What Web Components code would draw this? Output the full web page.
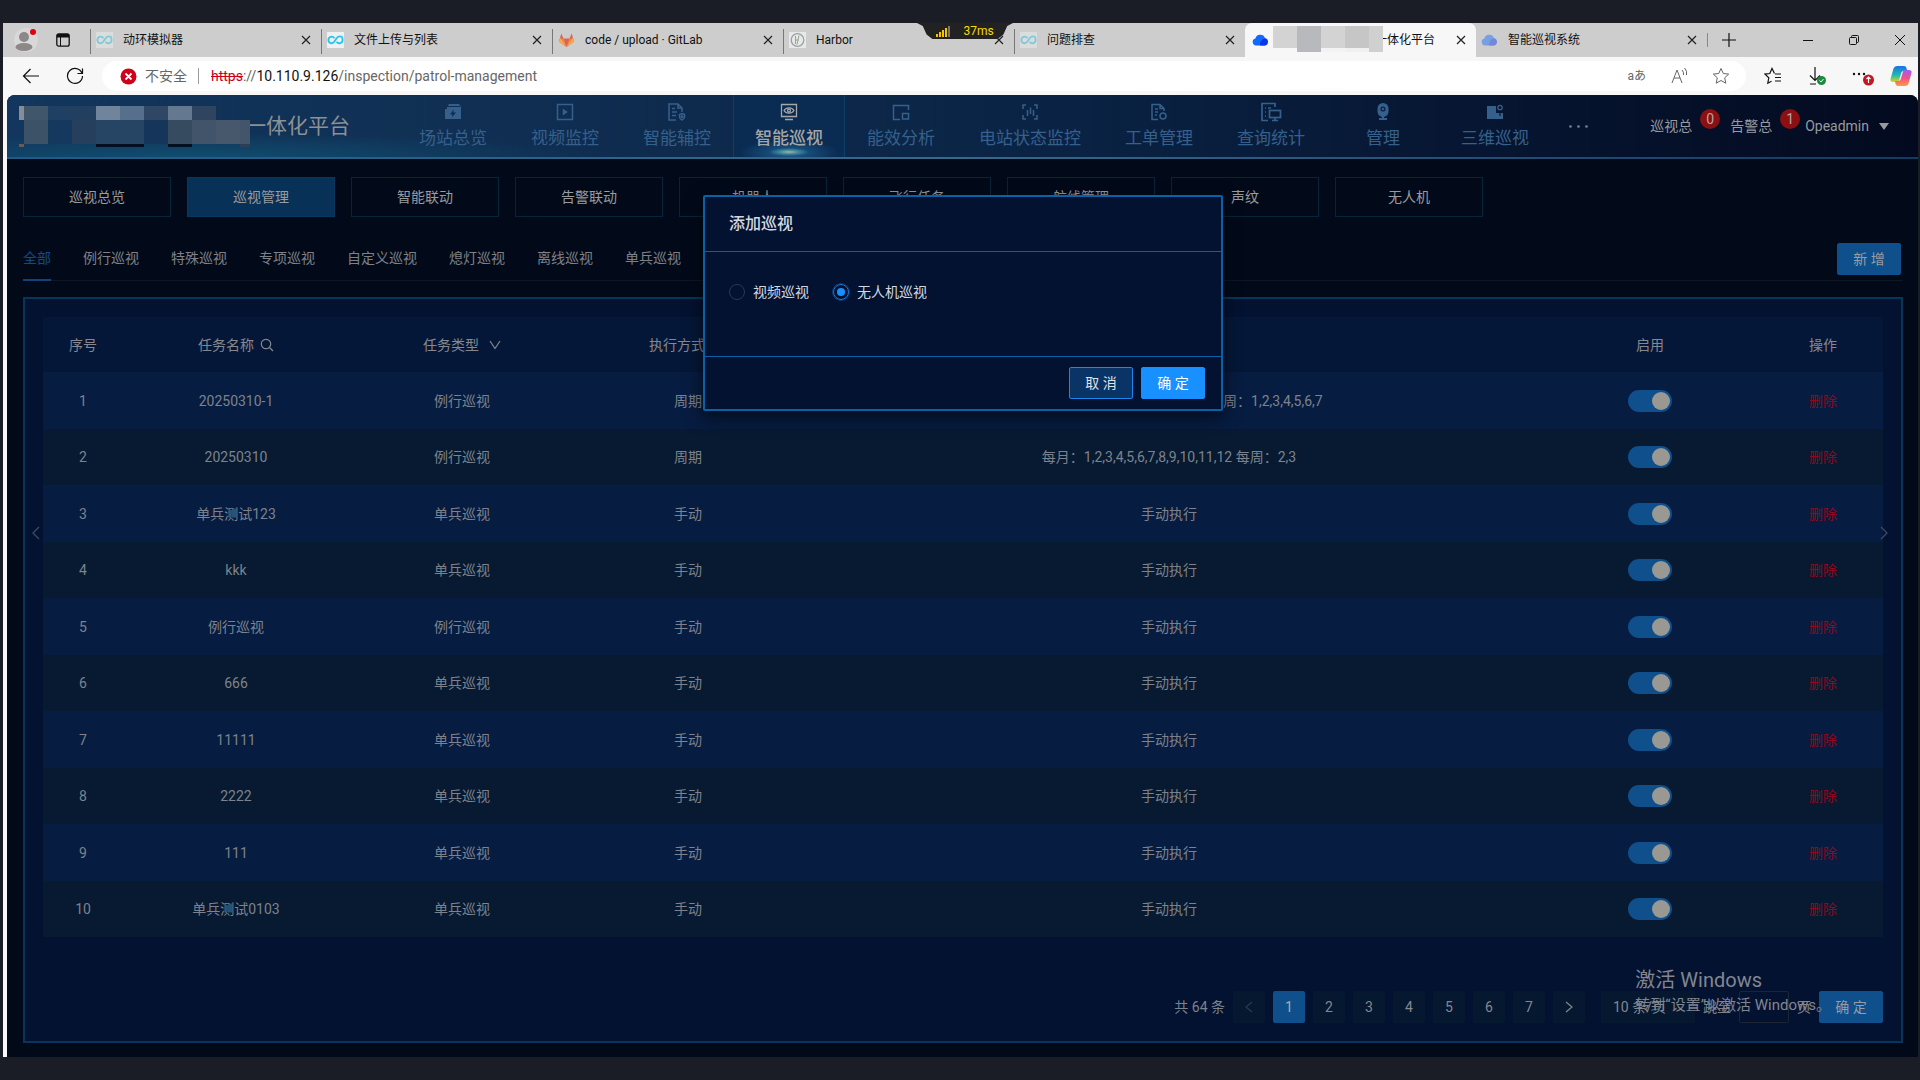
<!DOCTYPE html>
<html lang="zh-CN">
<head>
<meta charset="utf-8">
<title>巡视管理</title>
<style>
  body {
    margin: 0; min-height: 100vh; box-sizing: border-box; padding: 23px 2px 23px 3px;
    display: flex; background: #1a1d25;
    font-family: Roboto, "Noto Sans CJK SC", sans-serif; font-size: 14px; line-height: 22px;
  }
</style>
</head>
<body>
<browser-window>
  <browser-tab slot="tab" icon="loop" faded label="动环模拟器"></browser-tab>
  <browser-tab slot="tab" icon="loop" label="文件上传与列表"></browser-tab>
  <browser-tab slot="tab" icon="fox" label="code / upload · GitLab"></browser-tab>
  <browser-tab slot="tab" icon="harbor" label="Harbor"></browser-tab>
  <browser-tab slot="tab" icon="loop" faded label="问题排查"></browser-tab>
  <browser-tab slot="tab" icon="cloud" active masked label="一体化平台"></browser-tab>
  <browser-tab slot="tab" icon="cloud" faded label="智能巡视系统"></browser-tab>
  <patrol-page>
    <app-header slot="header">
      <nav-item icon="station" label="场站总览"></nav-item>
      <nav-item icon="video" label="视频监控"></nav-item>
      <nav-item icon="assist" label="智能辅控"></nav-item>
      <nav-item icon="patrol" label="智能巡视" active></nav-item>
      <nav-item icon="energy" label="能效分析"></nav-item>
      <nav-item icon="state" label="电站状态监控"></nav-item>
      <nav-item icon="order" label="工单管理"></nav-item>
      <nav-item icon="stats" label="查询统计"></nav-item>
      <nav-item icon="manage" label="管理"></nav-item>
      <nav-item icon="three" label="三维巡视"></nav-item>
    </app-header>
    <sub-menu slot="menu" items="巡视总览,巡视管理,智能联动,告警联动,机器人,飞行任务,航线管理,声纹,无人机" current="1"></sub-menu>
    <type-tabs slot="tabs" items="全部,例行巡视,特殊巡视,专项巡视,自定义巡视,熄灯巡视,离线巡视,单兵巡视">
      <ui-button>新 增</ui-button>
    </type-tabs>
    <patrol-panel slot="panel">
      <patrol-table></patrol-table>
      <page-pager slot="footer"></page-pager>
    </patrol-panel>
    <add-dialog slot="dialog" heading="添加巡视">
      <radio-choice name="kind" label="视频巡视"></radio-choice>
      <radio-choice name="kind" label="无人机巡视" checked></radio-choice>
      <ui-button slot="actions" kind="outline">取 消</ui-button>
      <ui-button slot="actions" kind="bright">确 定</ui-button>
    </add-dialog>
    <win-watermark slot="dialog"></win-watermark>
  </patrol-page>
</browser-window>

<script>
const define = (name, render) => customElements.define(name, class extends HTMLElement {
  connectedCallback() {
    if (this.shadowRoot) return;
    const t = document.createElement('template');
    t.innerHTML = '<style>*{box-sizing:border-box}button,input,select{font:inherit}a{text-decoration:none;color:inherit}svg{display:block;flex:none}</style>' + render(this);
    this.attachShadow({ mode: 'open' }).append(t.content.cloneNode(true));
  }
});
const attr = (el, n) => el.getAttribute(n) || '';
const line = (w, h, d, extra = '') => `<svg width="${w}" height="${h}" viewBox="0 0 ${w} ${h}" fill="none" stroke="currentColor" ${extra}>${d}</svg>`;
const mosaic = (w, h, cells) => `<svg class="mosaic" width="${w}" height="${h}" shape-rendering="crispEdges">${cells.map(([x, y, cw, ch, c]) => `<rect x="${x}" y="${y}" width="${cw}" height="${ch}" fill="${c}"/>`).join('')}</svg>`;

const FAVICONS = {
  loop: `<svg width="17" height="16" viewBox="0 0 17 16"><path fill="#eef1f2" d="M0 0h17v16H0z"/><path fill="none" stroke="#27c4e8" stroke-width="1.8" d="M15.6 5.6C14.6 4.2 11.6 3.6 9.8 6L7.4 9.6C5.6 12.4 1.4 11.4 1.4 8S5.6 3.6 7.4 6.2M9.6 9.8c1.8 2.6 6 1.600 6-1.800 0-1-.2-1.800-.7-2.300"/></svg>`,
  fox: `<svg width="17" height="16" viewBox="0 0 17 16" opacity=".75"><path fill="#e24329" d="M8.500 15 1 9.500 3.300 1.500l2.200 5h6l2.200-5L16 9.500z"/><path fill="#fc6d26" d="M8.500 15 5.500 6.500H2L1 9.500zM8.500 15l3-8.500H15l1 3z"/><path fill="#fca326" d="M1 9.500l1.200-3.600L8.500 15zM16 9.500l-1.200-3.600L8.500 15z"/></svg>`,
  harbor: `<svg width="17" height="16" viewBox="0 0 17 16"><path fill="#e8e8e8" d="M0 0h17v16H0z"/><circle cx="8.500" cy="8" r="6.300" fill="none" stroke="#9aa3a3" stroke-width="1.300"/><path stroke="#8fa98a" fill="none" d="M6.500 4v8M6.500 8h3M10 3.500 8 12.500"/></svg>`,
  cloud: `<svg width="17" height="16" viewBox="0 0 17 16"><path fill="#0f6bff" d="M4 13.500a3.500 3.500 0 0 1-.6-6.900 5 5 0 0 1 9.600-.6 3.900 3.900 0 0 1-.2 7.500z"/><path fill="#0a35e8" d="M8 13.500c-.5-3.500 2-6.500 5-6.900a3.500 3.500 0 0 1 0 6.900z"/></svg>`
};
const NAV = {
  station: line(18, 18, '<path fill="currentColor" stroke="none" fill-rule="evenodd" d="M5 1h10l2 3v12H1V6h2V4zM9.500 6.500L6 11.500h2.500l-.5 3 4-5H9.500z"/><path d="M3 3.500h13" stroke="#0f2d50"/>'),
  video: line(18, 18, '<rect x="1.500" y="1.500" width="15" height="15"/><path fill="currentColor" d="M7.500 7v4l3-2z"/>', 'stroke-width="1.500"'),
  assist: line(20, 18, '<path d="M9 17H2V1h9l4 4v4M11 1v4h4M5 5.500h3M5 9h5M5 12.500h4"/><path d="M15 10.500l2.500 1v2.500c0 1.500-2.500 3-2.500 3s-2.500-1.500-2.500-3v-2.500z"/><circle cx="15" cy="13.500" r=".8"/>', 'stroke-width="1.500"'),
  patrol: line(18, 18, '<path d="M1.500 1.500h15v12h-15zM5 16.500h8"/><path d="M4 7.500C6 4 12 4 14 7.500 12 11 6 11 4 7.500z"/><circle cx="9" cy="7.500" r="1.500"/>', 'stroke-width="1.300"'),
  energy: line(18, 18, '<path d="M8 16.500H1.500v-14h15V7"/><rect x="10.500" y="10.500" width="6" height="5.500"/>', 'stroke-width="1.500"'),
  state: line(18, 18, '<path d="M5 2H2v4M13 2h3v4M5 16H2v-4M13 16h3v-4M6.500 7v6M9.500 4.500V11M12.500 7v6"/>', 'stroke-width="1.500"'),
  order: line(18, 18, '<path d="M8 16.500H2v-15h8l4 4V8M10 1.500v4h4M5 6h3M5 9h3M5 12h2"/><circle cx="13" cy="13" r="3"/>', 'stroke-width="1.500"'),
  stats: line(22, 20, '<path d="M8 18.500H2v-17h13V5M5 6h1M8 6h3M5 10h1M5 14h1"/><rect x="9.500" y="8.500" width="11" height="7"/><path d="M15 15.500v3M12 18.500h6"/>', 'stroke-width="1.700"'),
  manage: line(18, 18, '<path fill="currentColor" stroke="none" fill-rule="evenodd" d="M9 0a5.500 5.500 0 0 0-5.500 5.500v3c0 3 2 5 4.500 5.400V15H5v2h8v-2h-3v-1.100c2.500-.4 4.500-2.400 4.500-5.400v-3A5.500 5.500 0 0 0 9 0zm0 3.500a2.500 2.500 0 1 1 0 5 2.500 2.500 0 0 1 0-5z"/><circle cx="9" cy="6" r="1" fill="currentColor"/>'),
  three: line(18, 18, '<path fill="currentColor" stroke="none" d="M1 3h9v7h7v6H1z"/><circle cx="14" cy="4.500" r="2.200"/><path d="M14 10v3" stroke="#0a1e3c"/>', 'stroke-width="1.300"')
};

define('browser-tab', el => {
  const active = el.hasAttribute('active');
  const cells = [[0,0,24,22,'#d3d3d3'],[24,0,24,26,'#b8b9bc'],[48,0,24,22,'#d3d3d3'],[72,0,24,22,'#c6c6c7'],[96,0,14,26,'#d0d0d0'],[48,22,24,4,'#f3f3f4'],[72,22,24,4,'#f0f0f0']];
  return `<style>
  :host{display:flex;flex:0 1 231px;min-width:0;height:34px;align-items:center;font-size:12px;color:#111;box-sizing:border-box;padding:0 6px 0 5px;${active ? 'padding-left:7px;background:#f7f7f7;border-radius:7px 7px 0 0;' : ''}position:relative}
  .ic{margin-right:${active ? 4 : 10}px;opacity:${el.hasAttribute('faded') ? .45 : 1}}
  .mosaic{position:relative;z-index:1;align-self:flex-start;margin-top:3px}
  span{white-space:nowrap}
  .mosaic + span{margin-left:-8px}
  button{margin-left:auto;border:0;background:none;padding:4px;color:#222}
  </style><div class="ic">${FAVICONS[attr(el, 'icon')]}</div>${el.hasAttribute('masked') ? mosaic(110, 26, cells) : ''}<span>${attr(el, 'label')}</span>
  <button aria-label="关闭标签页">${line(10, 10, '<path d="M1 1l8 8M9 1l-8 8"/>', 'stroke-width="1.200"')}</button>`;
});

define('browser-window', () => `<style>
  :host{display:flex;flex:1;flex-direction:column;min-width:0;background:#f7f7f7;position:relative}
  .strip{display:flex;height:34px;background:#cdcdcd;align-items:center}
  .lead{display:flex;align-items:center;gap:18px;width:87px;padding-left:11px;flex:none}
  .tabs{display:flex;flex:0 1 1617px;min-width:0}
  ::slotted(browser-tab:nth-of-type(-n+5)){border-left:1px solid #777;border-image:linear-gradient(transparent 20%,#777 20% 88%,transparent 88%) 1}
  .ctl{display:flex;flex:1;align-items:center;color:#111}
  .ctl button,.bar button{border:0;background:none;padding:0;color:inherit}
  .plus{border-left:1px solid #888!important;padding-left:14px!important;margin-right:auto}
  .wins{display:flex;gap:34px;padding-right:12px;align-items:center}
  .bar{display:flex;height:38px;align-items:center;padding:0 6px 0 19px;color:#111}
  .bar>button+button{margin-left:26px}
  .pill{display:flex;flex:1;height:30px;margin:0 18px 0 18px;padding:0 16px 0 18px;align-items:center;background:#fff;border-radius:15px;color:#666}
  .pill span{margin:0 11px 0 8px}
  .pill i{width:1px;height:16px;background:#999;margin-right:12px}
  .pill label{flex:1}
  .pill b{font-weight:400;color:#111}.pill s{color:#c8001c}
  .in{display:flex;gap:24px;align-items:center}
  .out{display:flex;gap:26px;align-items:center}
  .pad{flex:1;display:flex;padding-left:4px}
  .ping{position:absolute;left:914px;top:0;width:96px;height:16px;display:flex;align-items:center;justify-content:center;gap:12px;font-size:12px;line-height:16px;color:#f5d90a;background:#222;clip-path:polygon(0 0,100% 0,94% 18%,90% 72%,84% 100%,16% 100%,10% 72%,6% 18%)}
  </style>
  <div class="strip">
    <div class="lead">
      <svg width="24" height="24" viewBox="0 0 24 24"><circle cx="12" cy="12" r="12" fill="#d8d8d8"/><circle cx="10" cy="9" r="5" fill="#8b8887"/><ellipse cx="10" cy="19" rx="8.500" ry="4" fill="#8b8887"/><circle cx="19" cy="4" r="3" fill="#e0000f"/></svg>
      <svg width="14" height="14" viewBox="0 0 14 14"><rect x=".8" y=".8" width="12.400" height="12.400" rx="2" fill="none" stroke="#111" stroke-width="1.300"/><path d="M1 1h12v3.500H1z" fill="#111"/><path d="M4.500 4v9" stroke="#111"/></svg>
    </div>
    <div class="tabs"><slot name="tab"></slot></div>
    <div class="ctl"><button class="plus" aria-label="新建标签页">${line(14, 14, '<path d="M7 0v14M0 7h14"/>', 'stroke-width="1.200"')}</button>
      <div class="wins">
        <button aria-label="最小化">${line(12, 12, '<path d="M1 6.500h10"/>')}</button>
        <button aria-label="还原">${line(12, 12, '<rect x="1.500" y="3.500" width="7" height="7" rx="1"/><path d="M3.500 3.500v-1q0-1 1-1h5q1 0 1 1v5q0 1-1 1h-1"/>')}</button>
        <button aria-label="关闭">${line(12, 12, '<path d="M1 1l10 10M11 1L1 11"/>')}</button>
      </div></div>
  </div>
  <div class="bar">
    <button aria-label="后退">${line(18, 16, '<path d="M17 8H1.500M8.500 1L1.500 8l7 7"/>', 'stroke-width="1.200"')}</button>
    <button aria-label="刷新">${line(18, 18, '<path d="M16 6.200A7.500 7.500 0 1 0 16.500 9M16.500 1.500v5h-5"/>', 'stroke-width="1.200"')}</button>
    <div class="pill">
      <svg width="17" height="17" viewBox="0 0 17 17"><circle cx="8.500" cy="8.500" r="8" fill="#d0021b"/><path d="M5.500 5.500l6 6M11.500 5.500l-6 6" stroke="#fff" stroke-width="1.800"/></svg>
      <span>不安全</span><i></i><label><s>https</s>://<b>10.110.9.126</b>/inspection/patrol-management</label>
      <div class="in">
        <button aria-label="翻译" style="font-size:12px">aあ</button>
        <button aria-label="朗读">${line(18, 18, '<path d="M2 16L7 3l5 13M4 11h6M12 3q2 2 1.500 5M14.500 1q3 3 2 7"/>')}</button>
        <button aria-label="收藏">${line(18, 18, '<path d="M9 1.500l2.300 5 5.400.6-4 3.700 1.100 5.400L9 13.500l-4.800 2.700 1.100-5.400-4-3.700 5.400-.6z"/>')}</button>
      </div>
    </div>
    <div class="out">
      <button aria-label="收藏夹">${line(18, 18, '<path d="M10.500 6.500L8 1.500l-2.200 5-4.800.6 3.800 3.700-1 5.400 3.700-2M11 7h6M11 10.500h6M11 14h6"/>', 'stroke-width="1.200"')}</button>
      <button aria-label="下载"><svg width="18" height="20" viewBox="0 0 18 20"><path d="M7 1v13M2 9.500l5 5 5-5M2 18h6" fill="none" stroke="#111" stroke-width="1.200"/><circle cx="13.500" cy="14.500" r="4.500" fill="#1b8a3a"/><path d="M11.500 14.500l1.500 1.500 2.500-3" fill="none" stroke="#fff"/></svg></button>
      <button aria-label="更多"><svg width="22" height="20" viewBox="0 0 22 20"><g fill="#111"><circle cx="2" cy="8" r="1.200"/><circle cx="7" cy="8" r="1.200"/><circle cx="12" cy="8" r="1.200"/></g><circle cx="16.500" cy="14" r="5.500" fill="#c8141e"/><path d="M16.500 17v-6M14.500 13l2-2 2 2" fill="none" stroke="#fff" stroke-width="1.200"/></svg></button>
      <button aria-label="Copilot" style="margin-left:-10px"><svg width="22" height="22" viewBox="0 0 22 22"><defs><linearGradient id="a" x2="0" y2="1"><stop stop-color="#1b6fe8"/><stop offset=".6" stop-color="#1fc0a8"/><stop offset="1" stop-color="#e8d018"/></linearGradient><linearGradient id="b" x2="0" y2="1"><stop stop-color="#a45cf0"/><stop offset=".5" stop-color="#f0508c"/><stop offset="1" stop-color="#ff9a3c"/></linearGradient></defs><path fill="url(#a)" d="M7 1h7q2 0 2.500 2l.7 3h-3.500q-2 0-2.500 2l-2 7q-.5 2-2.500 2H3q-3 0-2.500-3l3-10.500Q4.300 1 7 1z"/><path fill="url(#b)" d="M15 21H8q-2 0-2.500-2L5 16h3.300q2 0 2.500-2l2-7q.5-2 2.500-2H19q3 0 2.500 3l-3 10.500Q17.700 21 15 21z"/></svg></button>
    </div>
  </div>
  <div class="pad"><slot></slot></div>
  <div class="ping"><svg width="15" height="11" viewBox="0 0 15 11"><path fill="#f5c400" d="M0 8h2v3H0zM3 6h2v5H3zM6 4h2v7H6z"/><path fill="#f5c400" d="M9 2h2v9H9z"/><path fill="#777" d="M12 0h2v11h-2z"/></svg><span>37ms</span></div>`);

define('patrol-page', () => `<style>
  :host{display:flex;flex:1;flex-direction:column;min-width:0;background:#020a1a;border-radius:8px 8px 0 0;overflow:hidden;position:relative;color:#8e9196}
  main{flex:1;display:flex;flex-direction:column;padding:18px 15px 14px 16px}
  ::slotted([slot=tabs]){margin-top:18px}
  ::slotted([slot=panel]){margin-top:16px;flex:1}
  </style><slot name="header"></slot><main><slot name="menu"></slot><slot name="tabs"></slot><slot name="panel"></slot></main><slot name="dialog"></slot>`);

define('app-header', () => {
  const cells = [[0,0,5,14,'#858d96'],[5,0,24,14,'#3f566b'],[29,0,24,14,'#1f4062'],[53,0,24,14,'#233f5f'],[77,0,24,14,'#70859c'],[101,0,24,14,'#566f8d'],[125,0,24,14,'#2f4765'],[149,0,24,14,'#64788f'],[173,0,24,14,'#2f455f'],
    [5,14,24,24,'#3c5267'],[29,14,24,24,'#15385e'],[53,14,24,24,'#263f5c'],[77,14,48,24,'#264463'],[125,14,24,24,'#16355a'],[149,14,24,24,'#364b60'],[173,14,24,24,'#42546a'],[197,14,24,24,'#47586c'],[221,14,10,24,'#43556a'],
    [0,38,5,3,'#6b5a55'],[77,38,48,3,'#041022'],[149,38,24,3,'#041022'],[221,38,10,3,'#2a3f58']];
  return `<style>
  :host{display:flex;flex:none;box-sizing:border-box;height:64px;border-bottom:2px solid #2d5b80;border-image:linear-gradient(90deg,#1f5b86,#39688a 50%,#123a63) 1;
    background:radial-gradient(ellipse 400px 24px at 190px 100%,rgba(15,88,120,.7),transparent),linear-gradient(90deg,#12365d,#0f2d50 30%,#0a2344 55%,#06142f 80%,#030a1f)}
  .brand{display:flex;flex:0 0 390px;align-items:center;padding-left:12px;font-size:21px;line-height:32px;color:#8d9095}
  .mosaic{position:relative;z-index:1}.brand span{margin-left:-5px}
  nav{display:flex}
  .more{width:54px;align-self:center;display:flex;justify-content:center;border:0;background:none;padding:0;color:#7d828b}
  .user{margin-left:auto;padding-right:29px;display:flex;align-items:center;color:#989a9e}
  em{font-style:normal;width:20px;height:20px;line-height:20px;border-radius:50%;background:#8c0f12;text-align:center;margin:0 10px 14px 8px;color:#b5a5a5}
  em.n{margin-right:5px}
  .user svg{margin-left:10px}
  </style>
  <div class="brand">${mosaic(231, 41, cells)}<span>一体化平台</span></div>
  <nav><slot></slot></nav>
  <button class="more" aria-label="更多"><svg width="19" height="3" fill="currentColor"><circle cx="1.500" cy="1.500" r="1.300"/><circle cx="9.500" cy="1.500" r="1.300"/><circle cx="17.500" cy="1.500" r="1.300"/></svg></button>
  <div class="user"><a href="#">巡视总</a><em>0</em><a href="#">告警总</a><em class="n">1</em><span>Opeadmin</span><svg width="10" height="7"><path fill="#9a9a9a" d="M0 0h10L5 7z"/></svg></div>`;
});

define('nav-item', el => {
  const on = el.hasAttribute('active');
  return `<style>
  :host{display:block}
  a{display:flex;flex-direction:column;align-items:center;gap:6px;min-width:112px;height:62px;padding:8px 22px 0;font-size:17px;color:${on ? '#a5a6a6' : '#35608c'};
   ${on ? 'font-weight:500;box-shadow:inset 1px 0 #0d4066,inset -1px 0 #0d4066;background:radial-gradient(ellipse 20px 4px at 50% 57px,#9ab9a8,#3f8398 50%,transparent),radial-gradient(ellipse 50px 14px at 50% 58px,#1d6090,transparent),#0a2b52' : ''}}
  i{height:18px;display:flex;align-items:center}
  </style><a href="#"><i>${NAV[attr(el, 'icon')]}</i>${attr(el, 'label')}</a>`;
});

define('sub-menu', el => `<style>
  :host{display:flex;gap:16px}
  a{flex:0 1 148px;height:40px;line-height:38px;text-align:center;border:1px solid #08243a;color:#999b9e;white-space:nowrap}
  a.on{background:#083158;border-color:#083860}
  </style>${attr(el, 'items').split(',').map((t, i) => `<a href="#" class="${i == attr(el, 'current') ? 'on' : ''}">${t}</a>`).join('')}`);

define('type-tabs', el => `<style>
  :host{display:flex;gap:32px;height:46px;box-shadow:inset 0 -1px #101722;align-items:center;padding-right:2px;color:#7e8187}
  a{line-height:46px;white-space:nowrap}
  a.on{color:#114b85;box-shadow:inset 0 -2px #11447a}
  ::slotted(*){margin:2px 0 0 auto}
  </style>${attr(el, 'items').split(',').map((t, i) => `<a href="#" class="${i ? '' : 'on'}">${t}</a>`).join('')}<slot></slot>`);

define('ui-button', el => {
  const look = { outline: 'background:#0a3366;border:1px solid #1b86ec;color:#dde3ea', bright: 'background:#1890ff;border:1px solid #1890ff;color:#fff' }[attr(el, 'kind')] || 'background:#0e4f8c;border:1px solid #0e4f8c;color:#989da3';
  return `<style>:host{display:block;flex:none}button{display:block;width:64px;height:32px;padding:0;border-radius:2px;${look}}</style><button><slot></slot></button>`;
});

define('patrol-panel', () => `<style>
  :host{display:flex;flex-direction:column;border:2px solid #08365a;background:#041231;padding:18px;box-sizing:border-box;position:relative}
  ::slotted(page-pager){margin-top:auto}
  .s{position:absolute;top:227px;border:0;padding:0;background:none;color:#3c4a66}.l{left:7px}.r{right:13px}
  </style><slot></slot><slot name="footer"></slot>
  <button class="s l" aria-label="上一页">${line(8, 14, '<path d="M7 1L1 7l6 6"/>', 'stroke-width="1.300"')}</button>
  <button class="s r" aria-label="下一页">${line(8, 14, '<path d="M1 1l6 6-6 6"/>', 'stroke-width="1.300"')}</button>`);

const MONTHS = '每月：1,2,3,4,5,6,7,8,9,10,11,12 每周：';
const ROWS = [
  ['20250310-1', '例行巡视', '周期', MONTHS + '1,2,3,4,5,6,7'], ['20250310', '例行巡视', '周期', MONTHS + '2,3'],
  ['单兵测试123', '单兵巡视'], ['kkk', '单兵巡视'], ['例行巡视', '例行巡视'], ['666', '单兵巡视'],
  ['11111', '单兵巡视'], ['2222', '单兵巡视'], ['111', '单兵巡视'], ['单兵测试0103', '单兵巡视']
];
define('patrol-table', () => `<style>
  :host{display:block}
  table{width:100%;border-collapse:collapse;table-layout:fixed;color:#7d828c}
  th,td{padding:0;text-align:center;font-weight:400}
  thead tr{height:55px;background:#051738;color:#85898f}
  tbody tr{height:57px;background:#071c41}
  tbody tr:nth-child(even){height:56px;background:#071a31}
  th div{display:flex;align-items:center;justify-content:center;gap:6px}
  th div.g{gap:10px}
  td a{color:#8d0a20}
  .i{width:80px}.m{width:226px}.z{width:120px}
  input{appearance:none;display:block;margin:0 auto;width:44px;height:22px;border-radius:11px;background:#0e4f8c;position:relative}
  input::before{content:"";position:absolute;right:2px;top:2px;width:18px;height:18px;border-radius:50%;background:#999893}
  </style><table><colgroup><col class="i"><col class="m"><col class="m"><col class="m"><col><col class="m"><col class="z"></colgroup>
  <thead><tr><th>序号</th><th><div>任务名称${line(14, 14, '<circle cx="6" cy="6" r="4.700"/><path d="M9.500 9.500L13 13"/>', 'stroke-width="1.200"')}</div></th><th><div class="g">任务类型${line(12, 10, '<path d="M1 1l5 7.500L11 1"/>', 'stroke-width="1.200"')}</div></th><th><div class="g">执行方式${line(12, 10, '<path d="M1 1l5 7.500L11 1"/>', 'stroke-width="1.200"')}</div></th><th></th><th>启用</th><th>操作</th></tr></thead>
  <tbody>${ROWS.map(([n, t, w = '手动', p = '手动执行'], i) => `<tr><td>${i + 1}</td><td>${n}</td><td>${t}</td><td>${w}</td><td>${p}</td><td><input type="checkbox" role="switch" checked aria-label="启用"></td><td><a href="#">删除</a></td></tr>`).join('')}</tbody></table>`);

define('page-pager', () => `<style>
  :host{display:flex;justify-content:flex-end;align-items:center;gap:8px;color:#7e838b}
  .p{width:32px;height:32px;border:0;border-radius:2px;padding:0;background:#05182f;color:#83878f;display:grid;place-items:center}
  .p.on{background:#0e4f8c;color:#a9adb2}
  .p.off{color:#2b3a50}
  select{appearance:none;width:94px;height:32px;margin-left:8px;padding:0 12px;border:0;background:#05182f;color:#83878f}
  label{display:flex;align-items:center;gap:8px}
  input{width:50px;height:32px;border:1px solid #1c2632;background:#041231;border-radius:2px}
  </style><span>共 64 条</span>
  <button class="p off" aria-label="上一页">${line(8, 12, '<path d="M7 1L1 6l6 5"/>', 'stroke-width="1.200"')}</button>
  ${[1,2,3,4,5,6,7].map(n => `<button class="p ${n == 1 ? 'on' : ''}">${n}</button>`).join('')}
  <button class="p" aria-label="下一页">${line(8, 12, '<path d="M1 1l6 5-6 5"/>', 'stroke-width="1.200"')}</button>
  <select aria-label="每页条数"><option>10 条/页</option></select>
  <label>跳至<input type="text">页</label><ui-button>确 定</ui-button>`);

define('add-dialog', el => `<style>
  :host{position:absolute;inset:0;padding:100px 0 0 1px;display:flex;justify-content:center;align-items:flex-start;color:#d3d8e0}
  section{width:520px;border:2px solid #0a62a6;border-radius:2px;background:#041231;box-shadow:0 6px 18px rgba(0,0,0,.6)}
  h2{margin:0;padding:16px 24px;font-size:16px;line-height:22px;font-weight:500;border-bottom:1px solid #0a62a6}
  .b{display:flex;gap:24px;height:104px;padding:24px}
  footer{display:flex;justify-content:flex-end;gap:8px;padding:10px 16px;border-top:1px solid #0a62a6}
  </style><section role="dialog" aria-label="${attr(el, 'heading')}"><h2>${attr(el, 'heading')}</h2><div class="b"><slot></slot></div><footer><slot name="actions"></slot></footer></section>`);

define('radio-choice', el => `<style>
  :host{display:block}
  label{display:flex;align-items:center;gap:8px;height:32px}
  input{appearance:none;margin:0;width:16px;height:16px;border:1px solid #2c3850;border-radius:50%;display:grid;place-items:center}
  input:checked{border-color:#1478d8;box-shadow:0 0 0 1px #0d3a70}
  input:checked::before{content:"";width:8px;height:8px;border-radius:50%;background:#1890ff}
  </style><label><input type="radio" name="${attr(el, 'name')}" ${el.hasAttribute('checked') ? 'checked' : ''}>${attr(el, 'label')}</label>`);

define('win-watermark', () => `<style>
  :host{position:absolute;right:87px;bottom:41px;color:#81868f;font-size:15px;line-height:22px;pointer-events:none}
  p{margin:0;white-space:nowrap}.t{font-size:20px;line-height:28px}
  </style><p class="t">激活 Windows</p><p>转到“设置”以激活 Windows。</p>`);
</script>
</body>
</html>
